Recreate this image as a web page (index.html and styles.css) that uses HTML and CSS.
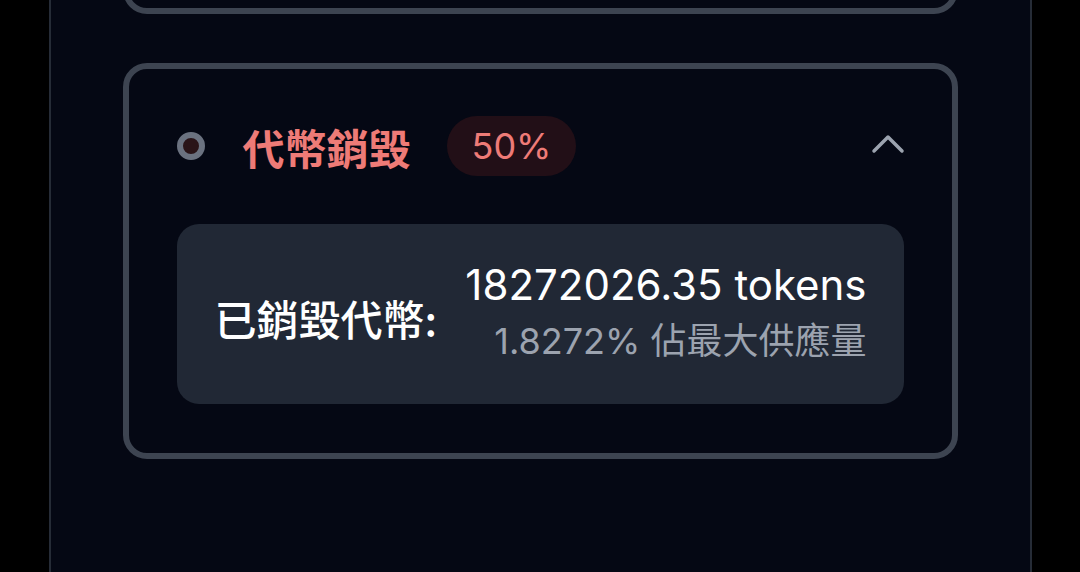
FILE: index.html
```html
<!DOCTYPE html>
<html lang="zh-Hant">
<head>
    <meta charset="UTF-8">
    <meta name="viewport" content="width=device-width, initial-scale=1.0">
    <title>代幣銷毀</title>
    <link rel="stylesheet" href="styles.css">
</head>
<body>
    <div class="panel">
        <!-- 上一個區塊（只露出底部） -->
        <div class="card card-prev"></div>

        <div class="card">
            <div class="card-header">
                <span class="dot"></span>
                <span class="title">代幣銷毀</span>
                <span class="badge">50%</span>
                <svg class="chevron" width="34" height="20" viewBox="0 0 34 20">
                    <path d="M3 17 L17 3 L31 17" fill="none" stroke="#9ca3af" stroke-width="3.5" stroke-linecap="round" stroke-linejoin="round"/>
                </svg>
            </div>

            <div class="burn-box">
                <div class="burn-label">已銷毀代幣:</div>
                <div class="burn-values">
                    <div class="burn-amount">18272026.35 tokens</div>
                    <div class="burn-percent">1.8272% 佔最大供應量</div>
                </div>
            </div>
        </div>
    </div>
</body>
</html>
```

FILE: styles.css
```css
body {
    margin: 0;
    background-color: #000;
    font-family: Inter, "Noto Sans CJK TC", sans-serif;
    color: #fff;
}
.panel {
    width: 983px;
    min-height: 100vh;
    margin: 0 auto;
    box-sizing: border-box;
    background-color: #050814;
    border-left: 2px solid #262c37;
    border-right: 2px solid #262c37;
    padding: 0 72px;
    display: flex;
    flex-direction: column;
    gap: 49px;
}
.card {
    border: 6px solid #3d4451;
    border-radius: 24px;
    padding: 47px 48px 49px;
}
.card-prev {
    height: 60px;
    margin-top: -58px;
    padding: 0;
    flex-shrink: 0;
}
.card-header {
    display: flex;
    align-items: center;
    height: 60px;
}
.dot {
    flex-shrink: 0;
    width: 16px;
    height: 16px;
    border: 6px solid #6b7280;
    border-radius: 50%;
    background-color: #2a1418;
    margin-right: 38px;
}
.title {
    font-size: 42px;
    font-weight: 700;
    color: #ee7b77;
    margin-right: 36px;
    font-family: "Noto Sans CJK TC", sans-serif;
}
.badge {
    height: 60px;
    line-height: 60px;
    padding: 0 25px;
    border-radius: 30px;
    background-color: #220f17;
    color: #ee7b77;
    font-size: 36px;
}
.chevron {
    margin-left: auto;
    margin-right: -1px;
    margin-top: -4px;
}
.burn-box {
    margin-top: 48px;
    height: 180px;
    box-sizing: border-box;
    background-color: #212835;
    border-radius: 22px;
    padding: 36px 37px 36px 38px;
    display: flex;
    align-items: center;
    justify-content: space-between;
}
.burn-label {
    font-size: 42px;
    font-weight: 500;
    font-family: "Noto Sans CJK TC", sans-serif;
    margin-top: 6px;
}
.burn-values {
    text-align: right;
}
.burn-amount {
    font-size: 42px;
    line-height: 54px;
}
.burn-percent {
    font-size: 36px;
    line-height: 58px;
    color: #9ca3af;
}
```
